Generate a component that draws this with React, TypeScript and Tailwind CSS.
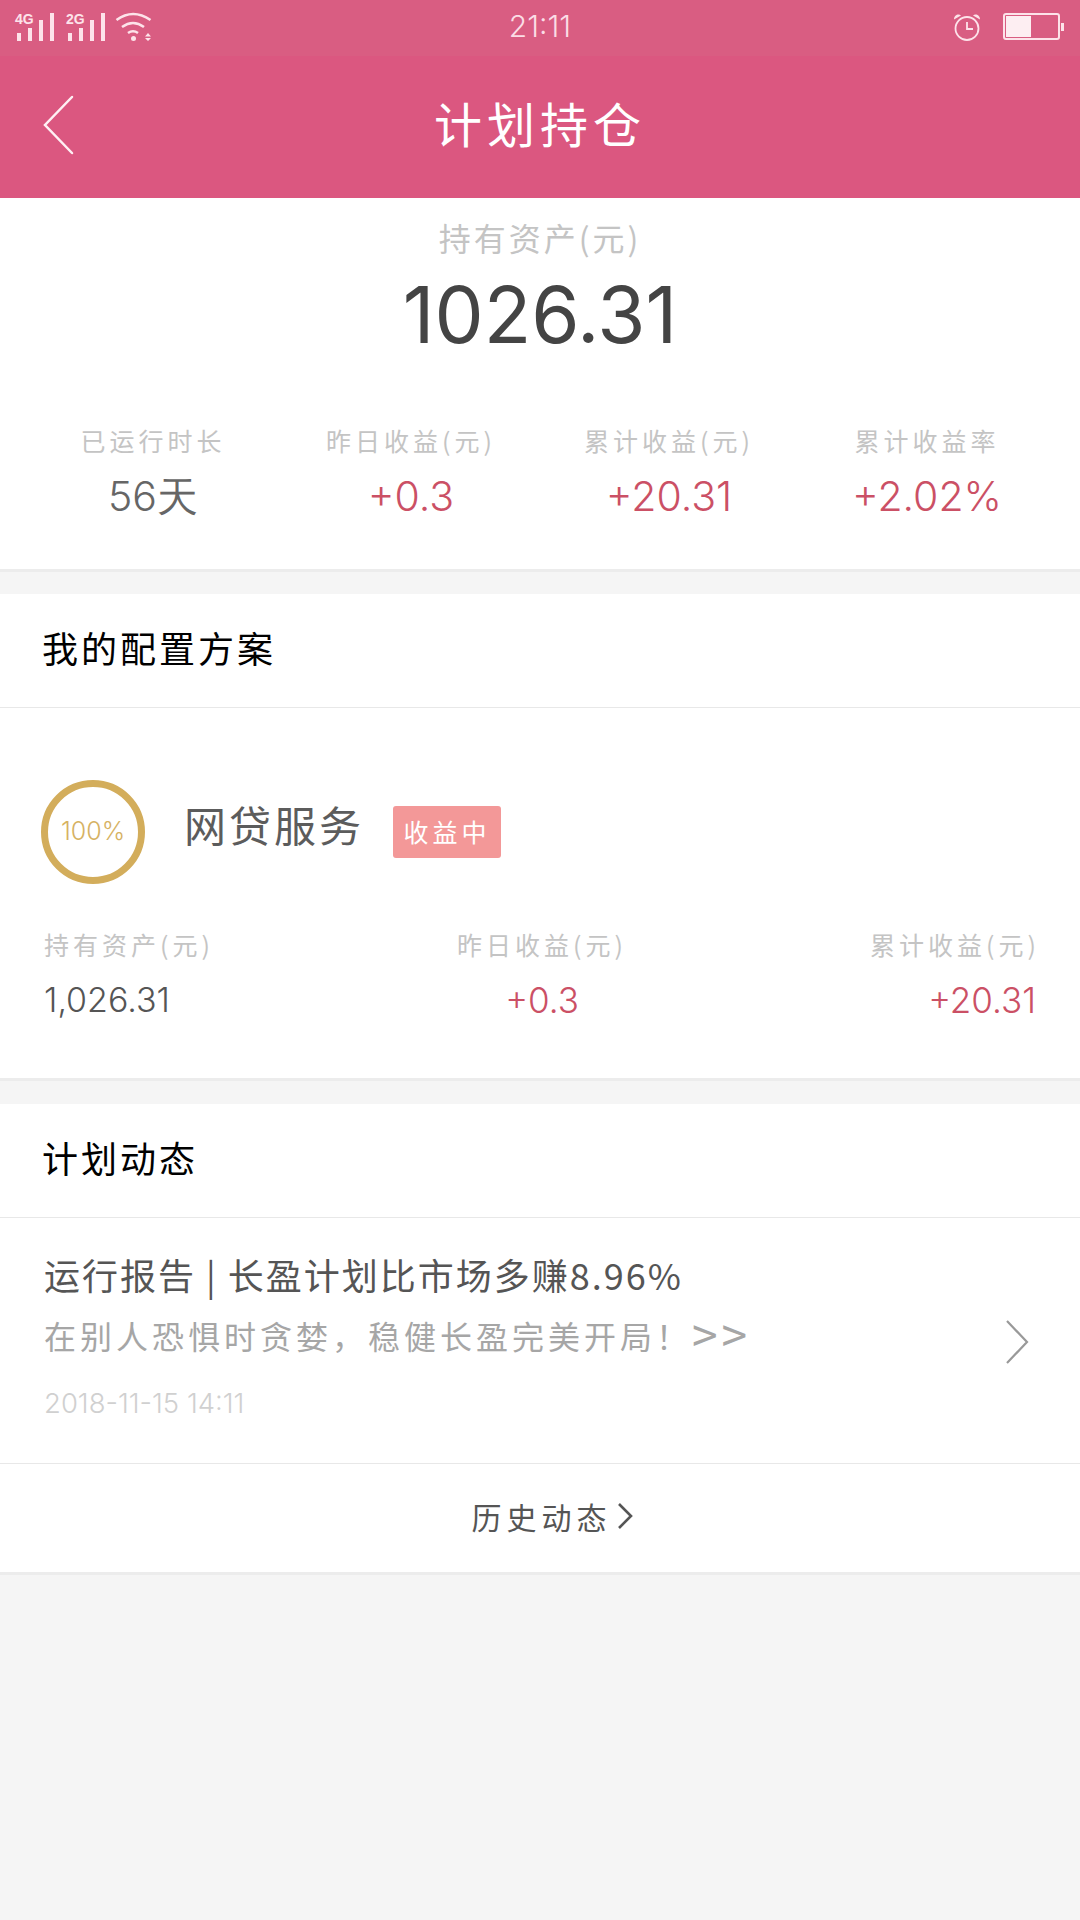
const stats = [
  { label: '已运行时长', value: '56天', red: false },
  { label: '昨日收益(元)', value: '+0.3', red: true },
  { label: '累计收益(元)', value: '+20.31', red: true },
  { label: '累计收益率', value: '+2.02%', red: true },
];

function Signal({ name }: { name: string }) {
  return (
    <div className="relative w-[39px] h-[28px]">
      <span className="absolute left-0 top-0 text-[14px] leading-[12px] font-bold text-[#fde3ea] font-['Liberation_Sans',sans-serif]">{name}</span>
      <svg viewBox="0 0 39 28" className="absolute inset-0 w-[39px] h-[28px]" fill="#fde3ea">
        <rect x="2" y="20" width="4" height="8" />
        <rect x="13" y="15" width="4" height="13" />
        <rect x="24" y="7" width="4" height="21" />
        <rect x="35" y="0" width="4" height="28" />
      </svg>
    </div>
  );
}

function StatusBar() {
  return (
    <div className="h-[56px] bg-[#d95d82] flex items-start justify-between relative pl-[15px] pr-[16px] pt-[13px]">
      <div className="flex items-start">
        <Signal name="4G" />
        <div className="ml-[12px]">
          <Signal name="2G" />
        </div>
        <svg viewBox="0 0 37 29" className="ml-[10px] -mt-[1px] w-[37px] h-[29px]" fill="none" stroke="#fde3ea" strokeWidth="2.6">
          <path d="M1.5 8Q18 -4 35.5 8" />
          <path d="M7 15Q18 7 29 15" />
          <path d="M13 21Q18 17.5 23 21" />
          <circle cx="18.5" cy="26.5" r="2.5" fill="#fde3ea" stroke="none" />
          <path d="M30 24.5h6l-3-3.5zM30 26h6l-3 3z" fill="#fde3ea" stroke="none" />
        </svg>
      </div>
      <span className="absolute left-0 right-0 top-[9px] text-center text-[30px] leading-[34px] text-[#fbdde6] font-['Inter',sans-serif] font-light">21:11</span>
      <div className="flex items-start gap-[22px]">
        <svg viewBox="0 0 28 28" className="w-[28px] h-[28px]" fill="none" stroke="#fde3ea" strokeWidth="1.8">
          <circle cx="14" cy="15.5" r="11.5" />
          <path d="M14 9v7h6" />
          <path d="M1 6.5C1 1.5 6 0.5 8 2.5zM27 6.5C27 1.5 22 0.5 20 2.5z" fill="#fde3ea" stroke="none" />
        </svg>
        <div className="flex items-center gap-[1px]">
          <div className="w-[57px] h-[27px] border-2 border-[#fde3ea] rounded-[3px] p-[1px]">
            <div className="h-full w-[25px] bg-[#fdeef2]" />
          </div>
          <div className="w-[3px] h-[8px] bg-[#fde3ea]" />
        </div>
      </div>
    </div>
  );
}

function NavBar() {
  return (
    <div className="h-[142px] bg-[#db5780] relative flex items-center justify-center pb-[10px]">
      <svg viewBox="0 0 31 60" className="absolute left-[43px] top-[39px] w-[31px] h-[60px]" fill="none" stroke="#fff0f4" strokeWidth="2.5" strokeLinecap="round">
        <path d="M29 2L2 30L29 58" />
      </svg>
      <h1 className="text-[48px] leading-none text-white tracking-[5px]">计划持仓</h1>
    </div>
  );
}

function Summary() {
  return (
    <section className="h-[374px] bg-white border-b-[3px] border-[#ececec] flex flex-col items-center">
      <p className="mt-[20px] text-[32px] leading-[38px] text-[#c4c4c4] tracking-[3px]">持有资产(元)</p>
      <p className="mt-[15px] text-[78px] leading-[88px] text-[#444444] font-['Inter',sans-serif]">1026.31</p>
      <div className="w-full grid grid-cols-4 px-[24px] mt-[64px]">
        {stats.map((s) => (
          <div key={s.label} className="flex flex-col items-center">
            <span className="text-[25px] leading-[34px] text-[#c4c4c4] tracking-[4px]">{s.label}</span>
            <span className={`mt-[15px] text-[41px] leading-[48px] font-['Inter',sans-serif] font-light ${s.red ? 'text-[#cb5065]' : 'text-[#666666]'}`}>
              {s.value}
            </span>
          </div>
        ))}
      </div>
    </section>
  );
}

function SectionTitle({ children }: { children: string }) {
  return (
    <div className="h-[114px] px-[42px] pb-[8px] flex items-center border-b border-[#e8e8e8] text-[36px] tracking-[3px] text-black">
      {children}
    </div>
  );
}

function Plan() {
  return (
    <section className="mt-[22px] h-[487px] bg-white border-b-[3px] border-[#ececec]">
      <SectionTitle>我的配置方案</SectionTitle>
      <div className="flex items-center pl-[41px] pt-[72px]">
        <div className="w-[104px] h-[104px] rounded-full border-[7px] border-[#d3ad5b] flex items-center justify-center text-[25px] text-[#d6b263] font-['Inter',sans-serif] font-light">
          100%
        </div>
        <span className="ml-[39px] mb-[16px] text-[42px] leading-none text-[#5c5c5c] tracking-[3px]">网贷服务</span>
        <span className="ml-[29px] w-[108px] h-[52px] bg-[#f39898] rounded-[3px] flex items-center justify-center text-[25px] text-white tracking-[4px]">
          收益中
        </span>
      </div>
      <div className="flex justify-between pl-[44px] pr-[40px] mt-[43px]">
        <div className="flex flex-col items-start">
          <span className="text-[25px] leading-[34px] text-[#c4c4c4] tracking-[4px]">持有资产(元)</span>
          <span className="mt-[17px] text-[34px] leading-[44px] text-[#555555] font-['Inter',sans-serif] font-light">1,026.31</span>
        </div>
        <div className="flex flex-col items-center">
          <span className="text-[25px] leading-[34px] text-[#c4c4c4] tracking-[4px]">昨日收益(元)</span>
          <span className="mt-[17px] text-[35px] leading-[44px] text-[#cb5065] font-['Inter',sans-serif] font-light">+0.3</span>
        </div>
        <div className="flex flex-col items-end">
          <span className="text-[25px] leading-[34px] text-[#c4c4c4] tracking-[4px]">累计收益(元)</span>
          <span className="mt-[17px] pr-[4px] text-[35px] leading-[44px] text-[#cb5065] font-['Inter',sans-serif] font-light">+20.31</span>
        </div>
      </div>
    </section>
  );
}

function News() {
  return (
    <section className="mt-[23px] bg-white border-b-[3px] border-[#ececec]">
      <SectionTitle>计划动态</SectionTitle>
      <div className="h-[246px] border-b border-[#e8e8e8] flex items-start justify-between pl-[44px] pr-[51px]">
        <div className="pt-[34px]">
          <p className="text-[36px] leading-[44px] text-[#555555] tracking-[2px] whitespace-nowrap">运行报告 | 长盈计划比市场多赚8.96%</p>
          <p className="mt-[14px] text-[32px] leading-[44px] text-[#a6a6a6] tracking-[4px] whitespace-nowrap">
            在别人恐惧时贪婪，稳健长盈完美开局！<span className="text-[46px] leading-none align-[-4px]">&gt;&gt;</span>
          </p>
          <p className="mt-[30px] text-[27.5px] leading-[32px] text-[#d0d0d0] font-['Inter',sans-serif] font-light">2018-11-15 14:11</p>
        </div>
        <svg viewBox="0 0 24 44" className="mt-[102px] w-[24px] h-[44px]" fill="none" stroke="#999999" strokeWidth="2.2">
          <path d="M2 1L22 22L2 43" />
        </svg>
      </div>
      <div className="h-[108px] pl-[24px] pb-[4px] flex items-center justify-center text-[30px] text-[#555555] tracking-[5px]">
        历史动态
        <svg viewBox="0 0 16 26" className="ml-[5px] w-[16px] h-[26px]" fill="none" stroke="#555555" strokeWidth="2.6">
          <path d="M2 1L14 13L2 25" />
        </svg>
      </div>
    </section>
  );
}

export default function App() {
  return (
    <div className="w-[1080px] h-[1920px] bg-[#f5f5f5] overflow-hidden font-['Noto_Sans_CJK_SC','Noto_Sans',sans-serif]">
      <StatusBar />
      <NavBar />
      <Summary />
      <Plan />
      <News />
    </div>
  );
}
